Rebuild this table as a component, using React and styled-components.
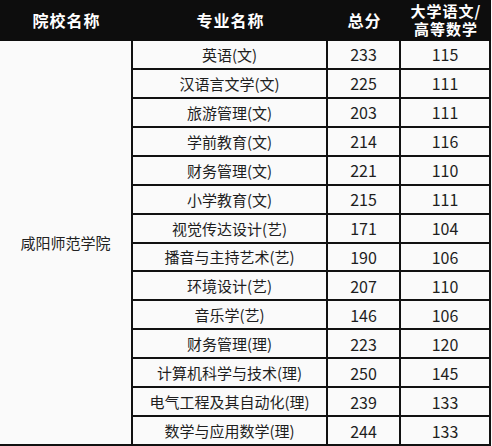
import React from "react";
import styled, { createGlobalStyle } from "styled-components";

const Global = createGlobalStyle`
  html, body { margin: 0; padding: 0; background: #fafafa; }
  body { font-family: "Noto Sans CJK SC", "Noto Sans", sans-serif; }
`;

const Table = styled.div`
  width: 491px;
  height: 446px;
  display: grid;
  grid-template-columns: 133px 195px 73px 90px;
  grid-template-rows: 41px repeat(14, 1fr);
  background: #fafafa;
  box-sizing: border-box;
`;

const Head = styled.div`
  background: #0d0d0d;
  color: #fff;
  font-weight: 700;
  font-size: 16px;
  letter-spacing: 1px;
  line-height: 18px;
  display: flex;
  flex-direction: column;
  align-items: center;
  justify-content: center;
  text-align: center;
  border-bottom: 2px solid #0d0d0d;
`;

const HeadLine = styled.span`
  display: block;
  height: 18px;
  line-height: 18px;
  font-size: 15px;
`;

const School = styled.div`
  grid-row: 2 / span 14;
  grid-column: 1;
  display: flex;
  align-items: center;
  justify-content: center;
  font-size: 15px;
  color: #222;
  border-right: 2px solid #111;
  border-bottom: 2px solid #111;
`;

const Cell = styled.div`
  display: flex;
  align-items: center;
  justify-content: center;
  color: #1e1e1e;
  font-size: ${(p) => (p.$num ? "16px" : "15px")};
  border-bottom: 2px solid #111;
  border-right: ${(p) => (p.$last || p.$mid ? "2px solid #111" : "none")};
  white-space: nowrap;
`;

const rows = [
  ["英语(文)", 233, 115],
  ["汉语言文学(文)", 225, 111],
  ["旅游管理(文)", 203, 111],
  ["学前教育(文)", 214, 116],
  ["财务管理(文)", 221, 110],
  ["小学教育(文)", 215, 111],
  ["视觉传达设计(艺)", 171, 104],
  ["播音与主持艺术(艺)", 190, 106],
  ["环境设计(艺)", 207, 110],
  ["音乐学(艺)", 146, 106],
  ["财务管理(理)", 223, 120],
  ["计算机科学与技术(理)", 250, 145],
  ["电气工程及其自动化(理)", 239, 133],
  ["数学与应用数学(理)", 244, 133],
];

export default function App() {
  return (
    <>
      <Global />
      <Table>
        <Head>院校名称</Head>
        <Head>专业名称</Head>
        <Head>总分</Head>
        <Head>
          <HeadLine>大学语文/</HeadLine>
          <HeadLine>高等数学</HeadLine>
        </Head>
        <School>咸阳师范学院</School>
        {rows.map(([name, total, sub]) => (
          <React.Fragment key={name}>
            <Cell $mid>{name}</Cell>
            <Cell $num $mid>{total}</Cell>
            <Cell $num $last>{sub}</Cell>
          </React.Fragment>
        ))}
      </Table>
    </>
  );
}
